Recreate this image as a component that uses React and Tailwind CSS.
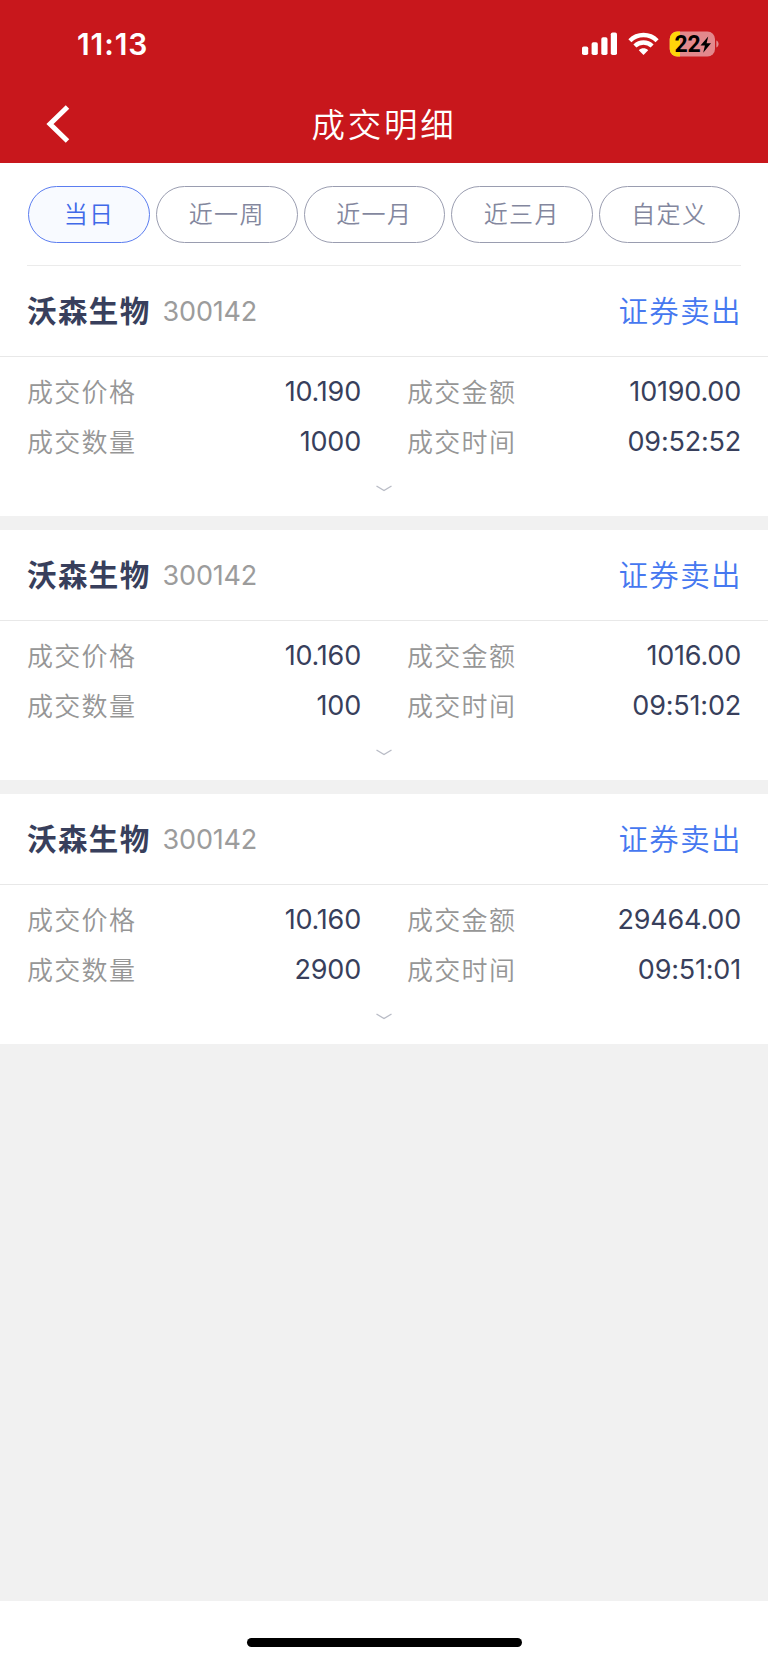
import { clsx } from 'clsx';

const filters = ['当日', '近一周', '近一月', '近三月', '自定义'];

const deals = [
  { id: 1, name: '沃森生物', code: '300142', side: '证券卖出', price: '10.190', amount: '10190.00', qty: '1000', time: '09:52:52' },
  { id: 2, name: '沃森生物', code: '300142', side: '证券卖出', price: '10.160', amount: '1016.00', qty: '100', time: '09:51:02' },
  { id: 3, name: '沃森生物', code: '300142', side: '证券卖出', price: '10.160', amount: '29464.00', qty: '2900', time: '09:51:01' },
];

function StatusBar() {
  return (
    <div className="flex h-[87px] items-center justify-between pl-[77px] pr-[48px] text-white">
      <span className="pt-px text-[30px] font-semibold leading-none tracking-[0.9px]">11:13</span>
      <div className="flex items-center">
        <svg width="36" height="24" viewBox="0 0 36 24" fill="currentColor">
          <rect x="0" y="14.5" width="6.2" height="8.5" rx="1.8" />
          <rect x="9.6" y="10.3" width="6.2" height="12.7" rx="1.8" />
          <rect x="19.3" y="5.3" width="6.2" height="17.7" rx="1.8" />
          <rect x="28.8" y="0.5" width="6.2" height="22.5" rx="1.8" />
        </svg>
        <svg className="ml-[10px]" width="31" height="24" viewBox="0 0 31 24" fill="none" stroke="currentColor" strokeWidth="4.4">
          <path d="M1.9 8.7C9.6 1.1 21.4 1.1 29.1 8.7" />
          <path d="M6.9 14C11.8 9.4 19.2 9.4 24.1 14" />
          <path d="M15.5 23L10.8 18.2C13.5 15.7 17.5 15.7 20.2 18.2Z" fill="currentColor" stroke="none" />
        </svg>
        <svg className="ml-[10px]" width="51" height="26" viewBox="0 0 51 26">
          <clipPath id="battery">
            <rect x="0.7" y="0.5" width="45.3" height="25" rx="7.5" />
          </clipPath>
          <g clipPath="url(#battery)">
            <rect width="46" height="26" fill="#e3888c" />
            <rect width="11" height="26" fill="#ffd60a" />
          </g>
          <path d="M47.3 9.5C50.3 10.6 50.3 15.4 47.3 16.5Z" fill="#e3888c" />
          <text x="5.4" y="21" className="font-[Roboto,sans-serif] text-[23px] font-bold" fill="#000">22</text>
          <path d="M39.2 5.5L31.5 14.6H35.9L34.2 21.8L42 12.3H37.6Z" fill="#000" />
        </svg>
      </div>
    </div>
  );
}

function Field({ label, value }) {
  return (
    <div className="flex items-center justify-between">
      <span className="text-[26px] font-[350] tracking-[1.3px] text-[#969696]">{label}</span>
      <span className="pt-px text-[27px] tracking-[-0.2px] text-[#383f5c]">{value}</span>
    </div>
  );
}

function DealCard({ deal }) {
  return (
    <section className="h-[250px] bg-white">
      <div className="flex h-[91px] items-center justify-between border-b border-[#e8e8e8] pl-[27px] pr-[26px]">
        <div className="flex items-center">
          <span className="text-[29.5px] font-bold tracking-[1.4px] text-[#383f5c]">{deal.name}</span>
          <span className="ml-3 pt-[2px] text-[27px] tracking-[-0.2px] text-[#9c9c9c]">{deal.code}</span>
        </div>
        <span className="text-[29.5px] font-[350] tracking-[1.4px] text-[#4678f0]">{deal.side}</span>
      </div>
      <div className="grid grid-cols-[334px_334px] auto-rows-[50px] gap-x-[46px] pl-[27px] pt-[10px]">
        <Field label="成交价格" value={deal.price} />
        <Field label="成交金额" value={deal.amount} />
        <Field label="成交数量" value={deal.qty} />
        <Field label="成交时间" value={deal.time} />
      </div>
      <svg className="mx-auto mt-[17px]" width="18" height="9" viewBox="0 0 18 9" fill="none" stroke="#b9bcc6" strokeWidth="1.4">
        <path d="M1.5 2L9 6.5L16.5 2" />
      </svg>
    </section>
  );
}

export default function App() {
  return (
    <div className="flex h-[1662px] w-[768px] flex-col bg-[#f1f1f1] font-[Inter,'Noto_Sans_CJK_SC',sans-serif]">
      <header className="h-[163px] bg-[#c8171c]">
        <StatusBar />
        <div className="grid h-[76px] grid-cols-[1fr_auto_1fr] items-center text-white">
          <svg className="ml-[46px]" width="25" height="40" viewBox="0 0 25 40" fill="none" stroke="currentColor" strokeWidth="5">
            <path d="M21.5 2L4 19L21.5 36" />
          </svg>
          <h1 className="text-[33.5px] font-[350] tracking-[2.7px]">成交明细</h1>
        </div>
      </header>

      <div className="bg-white px-[27px]">
        <div className="flex h-[103px] gap-[6px] border-b border-[#ebebeb] px-px pt-[23px]">
          {filters.map((label, i) => (
            <button
              key={label}
              className={clsx(
                'flex h-[57px] items-center justify-center rounded-full border pt-px text-[24px] font-[350] tracking-[1.3px]',
                i === 0 ? 'w-[122px] border-[#5b7df0] bg-[#f8faff] text-[#4069e8]' : 'flex-1 border-[#9a9db0] text-[#83879e]'
              )}
            >
              {label}
            </button>
          ))}
        </div>
      </div>

      <main className="flex flex-1 flex-col gap-[14px]">
        {deals.map((deal) => (
          <DealCard key={deal.id} deal={deal} />
        ))}
      </main>

      <footer className="flex h-[61px] justify-center bg-white pt-[37px]">
        <div className="h-[9px] w-[275px] rounded-full bg-black" />
      </footer>
    </div>
  );
}
